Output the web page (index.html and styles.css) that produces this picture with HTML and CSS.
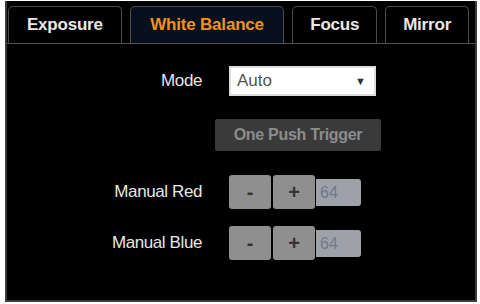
FILE: index.html
```html
<!DOCTYPE html>
<html lang="en">
<head>
  <meta charset="UTF-8" />
  <title>Camera | White Balance</title>
  <link rel="stylesheet" href="styles.css">
</head>
<body>

  <div class="panel">
    <!-- Tabs -->
    <div class="tabs">
      <div class="tab tab-exposure">Exposure</div>
      <div class="tab tab-wb active">White Balance</div>
      <div class="tab tab-focus">Focus</div>
      <div class="tab tab-mirror">Mirror</div>
    </div>

    <!-- White balance settings -->
    <div class="settings">
      <div class="row row-mode">
        <div class="label">Mode</div>
        <div class="select">
          <span>Auto</span>
          <span class="arrow">▼</span>
        </div>
      </div>

      <div class="row row-trigger">
        <div class="label"></div>
        <button class="trigger">One Push Trigger</button>
      </div>

      <div class="row row-red">
        <div class="label">Manual Red</div>
        <div class="stepper">
          <button>-</button>
          <button>+</button>
          <span class="value">64</span>
        </div>
      </div>

      <div class="row row-blue">
        <div class="label">Manual Blue</div>
        <div class="stepper">
          <button>-</button>
          <button>+</button>
          <span class="value">64</span>
        </div>
      </div>
    </div>
  </div>

</body>
</html>
```

FILE: styles.css
```css
* {
  box-sizing: border-box;
  margin: 0;
  padding: 0;
  font-family: 'Liberation Sans', Arial, sans-serif;
}

body {
  background: #fff;
  padding: 1px 3px 2px 5px;
}

.panel {
  height: 301px;
  background: #000;
  border: 2px solid #3c3c3c;
  border-top: none;
}

.tabs {
  display: flex;
  gap: 8px;
  padding: 5px 6px 0 1px;
  border-bottom: 1px solid #505050;
}

.tab {
  height: 37px;
  display: flex;
  align-items: center;
  justify-content: center;
  border: 1px solid #4a4a4a;
  border-bottom: none;
  border-radius: 5px 5px 0 0;
  color: #e8e8e8;
  font-size: 17px;
  font-weight: bold;
  letter-spacing: -0.2px;
}

.tab-exposure { width: 114px; }
.tab-wb { width: 155px; }
.tab-focus { width: 85px; }
.tab-mirror { width: 84px; }

.tab.active {
  background: #07101e;
  color: #f0921e;
}

.settings {
  display: flex;
  flex-direction: column;
  padding-top: 22px;
}

.row {
  display: flex;
  align-items: center;
}

.label {
  width: 195px;
  margin-right: 27px;
  text-align: right;
  color: #e6e6e6;
  font-size: 17px;
  letter-spacing: -0.4px;
}

.row-trigger {
  margin-top: 23px;
}

.row-red {
  margin-top: 24px;
}

.row-blue {
  margin-top: 17px;
}

.select {
  width: 147px;
  height: 30px;
  background: #fff;
  border: 2px solid #ddd;
  display: flex;
  align-items: center;
  justify-content: space-between;
  padding: 0 8px 0 6px;
  color: #555;
  font-size: 17px;
}

.select .arrow {
  font-size: 11px;
  color: #333;
}

.trigger {
  margin-left: -14px;
  width: 166px;
  height: 32px;
  background: #3a3a3a;
  border: none;
  border-radius: 2px;
  color: #8c8c8c;
  font-size: 16px;
  font-weight: bold;
  letter-spacing: -0.3px;
}

.stepper {
  display: flex;
  align-items: center;
}

.stepper button {
  width: 42px;
  height: 34px;
  margin-right: 2px;
  background: #8f8f8f;
  border: none;
  border-radius: 3px;
  color: #333;
  font-size: 20px;
  font-weight: bold;
}

.stepper .value {
  width: 45px;
  height: 27px;
  margin-left: -1px;
  background: #9ea2a8;
  border-radius: 0 3px 3px 0;
  color: #6e7a8e;
  font-size: 16px;
  line-height: 27px;
  padding-left: 4px;
}
```
